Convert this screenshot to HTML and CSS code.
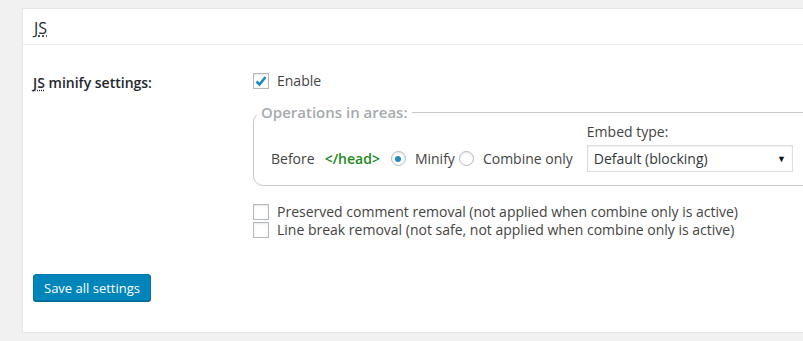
FILE: index.html
```html
<!DOCTYPE html>
<html lang="en">
<head>
    <meta charset="UTF-8">
    <title>JS settings</title>
    <link rel="stylesheet" href="styles.css">
</head>
<body>
    <div class="postbox">
        <h2 class="hndle"><abbr title="JavaScript">JS</abbr></h2>
        <div class="inside">
            <div class="fila">
                <div class="etiqueta"><abbr title="JavaScript">JS</abbr> minify settings:</div>
                <div class="campos">
                    <label class="opcion">
                        <span class="check marcado">
                            <svg width="14" height="14" viewBox="0 0 14 14"><polyline points="2.5,7.5 5.5,10.5 11.5,3" fill="none" stroke="#1e8cbe" stroke-width="2.6"/></svg>
                        </span>
                        Enable
                    </label>

                    <fieldset class="areas">
                        <legend>Operations in areas:</legend>
                        <div class="linea">
                            <div class="grupo">
                                <span class="antes">Before</span>
                                <span class="tag">&lt;/head&gt;</span>
                                <span class="radio activo"></span>
                                <span class="texto-minify">Minify</span>
                                <span class="radio"></span>
                                <span>Combine only</span>
                            </div>
                            <div class="embed">
                                <div class="embed-label">Embed type:</div>
                                <div class="select">
                                    <span>Default (blocking)</span>
                                    <span class="flecha">▼</span>
                                </div>
                            </div>
                        </div>
                    </fieldset>

                    <div class="extras">
                        <label class="opcion"><span class="check"></span>Preserved comment removal (not applied when combine only is active)</label>
                        <label class="opcion"><span class="check"></span>Line break removal (not safe, not applied when combine only is active)</label>
                    </div>
                </div>
            </div>
            <button class="boton">Save all settings</button>
        </div>
    </div>
</body>
</html>
```

FILE: styles.css
```css
body {
    margin: 0;
    background: #f1f1f1;
    color: #444;
    font-family: "Open Sans", sans-serif;
    font-size: 14px;
    overflow: hidden;
}
abbr {
    text-decoration: underline dotted;
    text-underline-offset: 2px;
}
.postbox {
    margin: 8px 0 0 22px;
    width: 900px;
    background: #fff;
    border: 1px solid #e5e5e5;
    box-shadow: 0 1px 1px rgba(0, 0, 0, 0.04);
}
.hndle {
    margin: 0;
    padding: 8px 11px 5px;
    font-size: 16px;
    font-weight: 400;
    line-height: 22px;
    color: #23282d;
    border-bottom: 1px solid #eee;
}
.inside {
    padding: 0 10px 31px;
}
.fila {
    display: grid;
    grid-template-columns: 220px 1fr;
    padding-top: 27px;
}
.etiqueta {
    font-weight: 600;
    color: #23282d;
    line-height: 20px;
    padding-top: 1px;
}
.opcion {
    display: flex;
    align-items: center;
    gap: 8px;
    line-height: 18px;
    height: 18px;
}
.check {
    width: 16px;
    height: 16px;
    box-sizing: border-box;
    border: 1px solid #b4b9be;
    background: #fff;
    box-shadow: inset 0 1px 2px rgba(0, 0, 0, 0.1);
    display: flex;
    align-items: center;
    justify-content: center;
    flex: none;
}
.areas {
    margin: 12px 0 0;
    padding: 0 17px 13px;
    width: 600px;
    border: 1px solid #c8c8c8;
    border-radius: 10px;
}
.areas legend {
    margin-left: -14px;
    padding: 0 4px;
    color: #a5aaae;
    font-size: 15px;
    font-weight: 600;
    line-height: 20px;
}
.linea {
    display: flex;
    align-items: flex-end;
    gap: 14px;
}
.grupo {
    display: flex;
    align-items: center;
    height: 27px;
}
.antes {
    margin-right: 10px;
}
.tag {
    color: #1a8a1a;
    font-weight: 600;
    margin-right: 11px;
}
.radio {
    width: 15px;
    height: 15px;
    box-sizing: border-box;
    border: 1px solid #b4b9be;
    border-radius: 50%;
    background: #fff;
    box-shadow: inset 0 1px 2px rgba(0, 0, 0, 0.1);
    display: flex;
    align-items: center;
    justify-content: center;
    margin-right: 9px;
}
.radio.activo::before {
    content: "";
    width: 6px;
    height: 6px;
    border-radius: 50%;
    background: #1e8cbe;
}
.texto-minify {
    margin-right: 4px;
}
.embed-label {
    line-height: 20px;
    margin-bottom: 3px;
}
.select {
    width: 206px;
    height: 27px;
    box-sizing: border-box;
    border: 1px solid #ddd;
    box-shadow: inset 0 1px 2px rgba(0, 0, 0, 0.07);
    display: flex;
    align-items: center;
    justify-content: space-between;
    padding: 0 6px 0 6px;
    color: #32373c;
}
.flecha {
    font-size: 9px;
    color: #111;
}
.extras {
    margin-top: 17px;
}
.boton {
    margin-top: 35px;
    height: 27px;
    padding: 0 10px;
    font-family: "Open Sans", sans-serif;
    font-size: 13px;
    color: #fff;
    background: #0085ba;
    border: 1px solid #0073aa;
    border-radius: 3px;
    box-shadow: 0 1px 0 #006799;
    cursor: pointer;
}
```
